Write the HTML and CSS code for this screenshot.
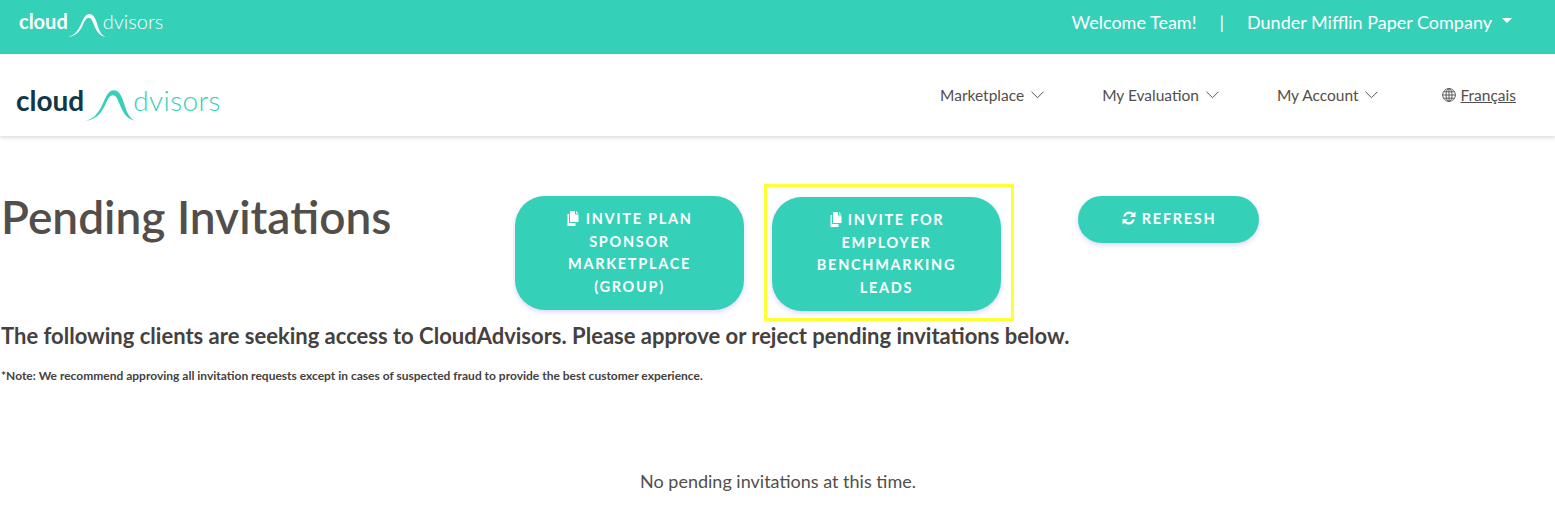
FILE: index.html
```html
<!DOCTYPE html>
<html lang="en">
<head>
<meta charset="utf-8">
<title>Pending Invitations</title>
<link rel="stylesheet" href="styles.css">
</head>
<body>
<header class="topbar">
  <a class="logo logo-small">
    <span class="logo-a">cloud</span>
    <svg class="swoosh" viewBox="0 0 40 26"><path d="M1 25C8 23 11 19 15 10C18 3 20 1 23 1C27 1 29 5 31 11C33 18 35 23 40 25C34 24 31 20 28 13C26 8 25 5 22 5C20 5 18 8 16 13C12 21 8 24 1 25Z"/></svg>
    <span class="logo-b">dvisors</span>
  </a>
  <div class="welcome">
    <span>Welcome Team!</span>
    <span class="sep">|</span>
    <span>Dunder Mifflin Paper Company</span>
    <span class="caret"></span>
  </div>
</header>
<nav class="navbar">
  <a class="logo logo-large">
    <span class="logo-a">cloud</span>
    <svg class="swoosh" viewBox="0 0 40 26"><path d="M1 25C8 23 11 19 15 10C18 3 20 1 23 1C27 1 29 5 31 11C33 18 35 23 40 25C34 24 31 20 28 13C26 8 25 5 22 5C20 5 18 8 16 13C12 21 8 24 1 25Z"/></svg>
    <span class="logo-b">dvisors</span>
  </a>
  <ul class="menu">
    <li class="menu-item">Marketplace <svg class="chev" viewBox="0 0 12 7"><path d="M.5.5 6 6l5.500-5.500"/></svg></li>
    <li class="menu-item">My Evaluation <svg class="chev" viewBox="0 0 12 7"><path d="M.5.5 6 6l5.500-5.500"/></svg></li>
    <li class="menu-item">My Account <svg class="chev" viewBox="0 0 12 7"><path d="M.5.5 6 6l5.500-5.500"/></svg></li>
    <li class="menu-item lang">
      <svg class="globe" viewBox="0 0 14 14"><circle cx="7" cy="7" r="6.400"/><ellipse cx="7" cy="7" rx="3" ry="6.400"/><path d="M7 .6v12.800M.6 7h12.800M1.500 3.800h11M1.500 10.200h11"/></svg>
      <a class="lang-link">Français</a>
    </li>
  </ul>
</nav>
<main class="content">
  <div class="head-row">
    <h1 class="title">Pending Invitations</h1>
    <div class="actions">
      <button class="btn btn-plan">
        <svg class="copy" viewBox="0 0 14 15"><path d="M4 0h5v3.500h3.500V11H4zM10 0l2.500 2.500H10zM3 3v9h6.500v3H1.500V3z"/></svg> INVITE PLAN SPONSOR MARKETPLACE (GROUP)
      </button>
      <div class="highlight">
        <button class="btn">
          <svg class="copy" viewBox="0 0 14 15"><path d="M4 0h5v3.500h3.500V11H4zM10 0l2.500 2.500H10zM3 3v9h6.500v3H1.500V3z"/></svg> INVITE FOR EMPLOYER BENCHMARKING LEADS
        </button>
      </div>
      <button class="btn btn-refresh">
        <svg class="sync" viewBox="0 0 16 16"><path d="M2.200 6.500C2.900 3.500 5.200 1.500 8.200 1.500c1.700 0 3.200.7 4.300 1.800L14.500 1.500V7H9l2-2c-.7-.8-1.700-1.200-2.800-1.200C6.400 3.800 5 4.900 4.500 6.500zM13.800 9.500C13.100 12.500 10.800 14.500 7.800 14.500c-1.700 0-3.200-.7-4.300-1.800L1.500 14.500V9H7l-2 2c.7.800 1.700 1.200 2.800 1.200 1.800 0 3.200-1.100 3.700-2.700z"/></svg> REFRESH
      </button>
    </div>
  </div>
  <h2 class="lead">The following clients are seeking access to CloudAdvisors. Please approve or reject pending invitations below.</h2>
  <p class="note">*Note: We recommend approving all invitation requests except in cases of suspected fraud to provide the best customer experience.</p>
  <p class="empty">No pending invitations at this time.</p>
</main>
</body>
</html>
```
FILE: styles.css
```css
* { box-sizing: border-box; }
html, body { margin: 0; padding: 0; }
body {
  font-family: "Lato", "Noto Sans", sans-serif;
  color: #524e4c;
  background: #fff;
  height: 525px;
  overflow: hidden;
}
.topbar {
  height: 54px;
  background: #35d0b8;
  color: #fff;
  display: flex;
  justify-content: space-between;
  padding: 0 43px 0 19px;
}
.logo { display: flex; align-items: flex-end; }
.logo-small { height: 38px; color: #fff; font-size: 20px; }
.logo-small .logo-a { font-weight: 700; line-height: 33px; }
.logo-small .logo-b { font-weight: 300; line-height: 33px; margin-left: -3px; }
.logo-small .swoosh { width: 39px; height: 25px; fill: #fff; margin: 0 0 0 -1px; }
.welcome {
  display: flex;
  align-items: center;
  height: 44px;
  font-size: 18px;
}
.sep { margin: 0 23px; }
.caret {
  width: 0;
  height: 0;
  margin-left: 10px;
  border-left: 5px solid transparent;
  border-right: 5px solid transparent;
  border-top: 5px solid #fff;
  margin-bottom: 4px;
}
.navbar {
  height: 82px;
  display: flex;
  justify-content: space-between;
  align-items: center;
  padding: 0 39px 0 16px;
  box-shadow: 0 2px 4px rgba(0,0,0,.14);
}
.logo-large { height: 60px; font-size: 28px; }
.logo-large .logo-a { color: #10384a; font-weight: 700; line-height: 50px; }
.logo-large .logo-b { color: #35d0b8; font-weight: 300; line-height: 50px; margin-left: -4px; letter-spacing: .4px; }
.logo-large .swoosh { width: 54px; height: 33px; fill: #35d0b8; margin: 0 0 3px -1px; }
.menu {
  list-style: none;
  margin: 0;
  padding: 0;
  display: flex;
  align-items: center;
  font-size: 15.500px;
}
.menu-item { display: flex; align-items: center; margin-left: 58px; white-space: pre; }
.menu-item.lang { margin-left: 64px; }
.chev { width: 13px; height: 8px; fill: none; stroke: #524e4c; stroke-width: .9; margin-left: 3px; }
.globe { width: 14px; height: 14px; fill: none; stroke: #524e4c; stroke-width: .9; margin-right: 4px; }
.lang-link { text-decoration: underline; }
.content { padding: 0 0 0 1px; }
.head-row { display: flex; align-items: flex-start; padding-top: 48px; }
.title {
  margin: 0;
  width: 514px;
  padding-top: 5px;
  font-size: 46px;
  font-weight: 600;
  line-height: 55px;
  color: #524e4c;
}
.actions { display: flex; align-items: flex-start; }
.btn {
  width: 229px;
  padding: 12px 24px;
  border: 0;
  border-radius: 30px;
  background: #35d0b8;
  color: #fff;
  font-family: inherit;
  font-size: 14.500px;
  font-weight: 700;
  letter-spacing: 1.700px;
  line-height: 22.500px;
  text-align: center;
  box-shadow: 0 2px 5px rgba(90,70,220,.22);
}
.btn-plan { margin-top: 12px; }
.highlight {
  width: 250px;
  height: 137px;
  margin-left: 20px;
  padding: 10px 10px 0 5px;
  border: 3px solid #ffff33;
}
.btn-refresh { width: 181px; margin: 12px 0 0 64px; padding: 12px 10px; }
.copy { width: 14px; height: 15px; fill: #fff; vertical-align: -2px; }
.sync { width: 16px; height: 16px; fill: #fff; vertical-align: -2px; }
.lead {
  margin: 0;
  font-size: 22px;
  font-weight: 700;
  line-height: 30px;
  color: #45413f;
}
.note {
  margin: 17px 0 0;
  font-size: 12px;
  font-weight: 700;
  line-height: 16px;
  color: #45413f;
}
.empty {
  margin: 85px 0 0;
  font-size: 18px;
  line-height: 24px;
  text-align: center;
}
```
